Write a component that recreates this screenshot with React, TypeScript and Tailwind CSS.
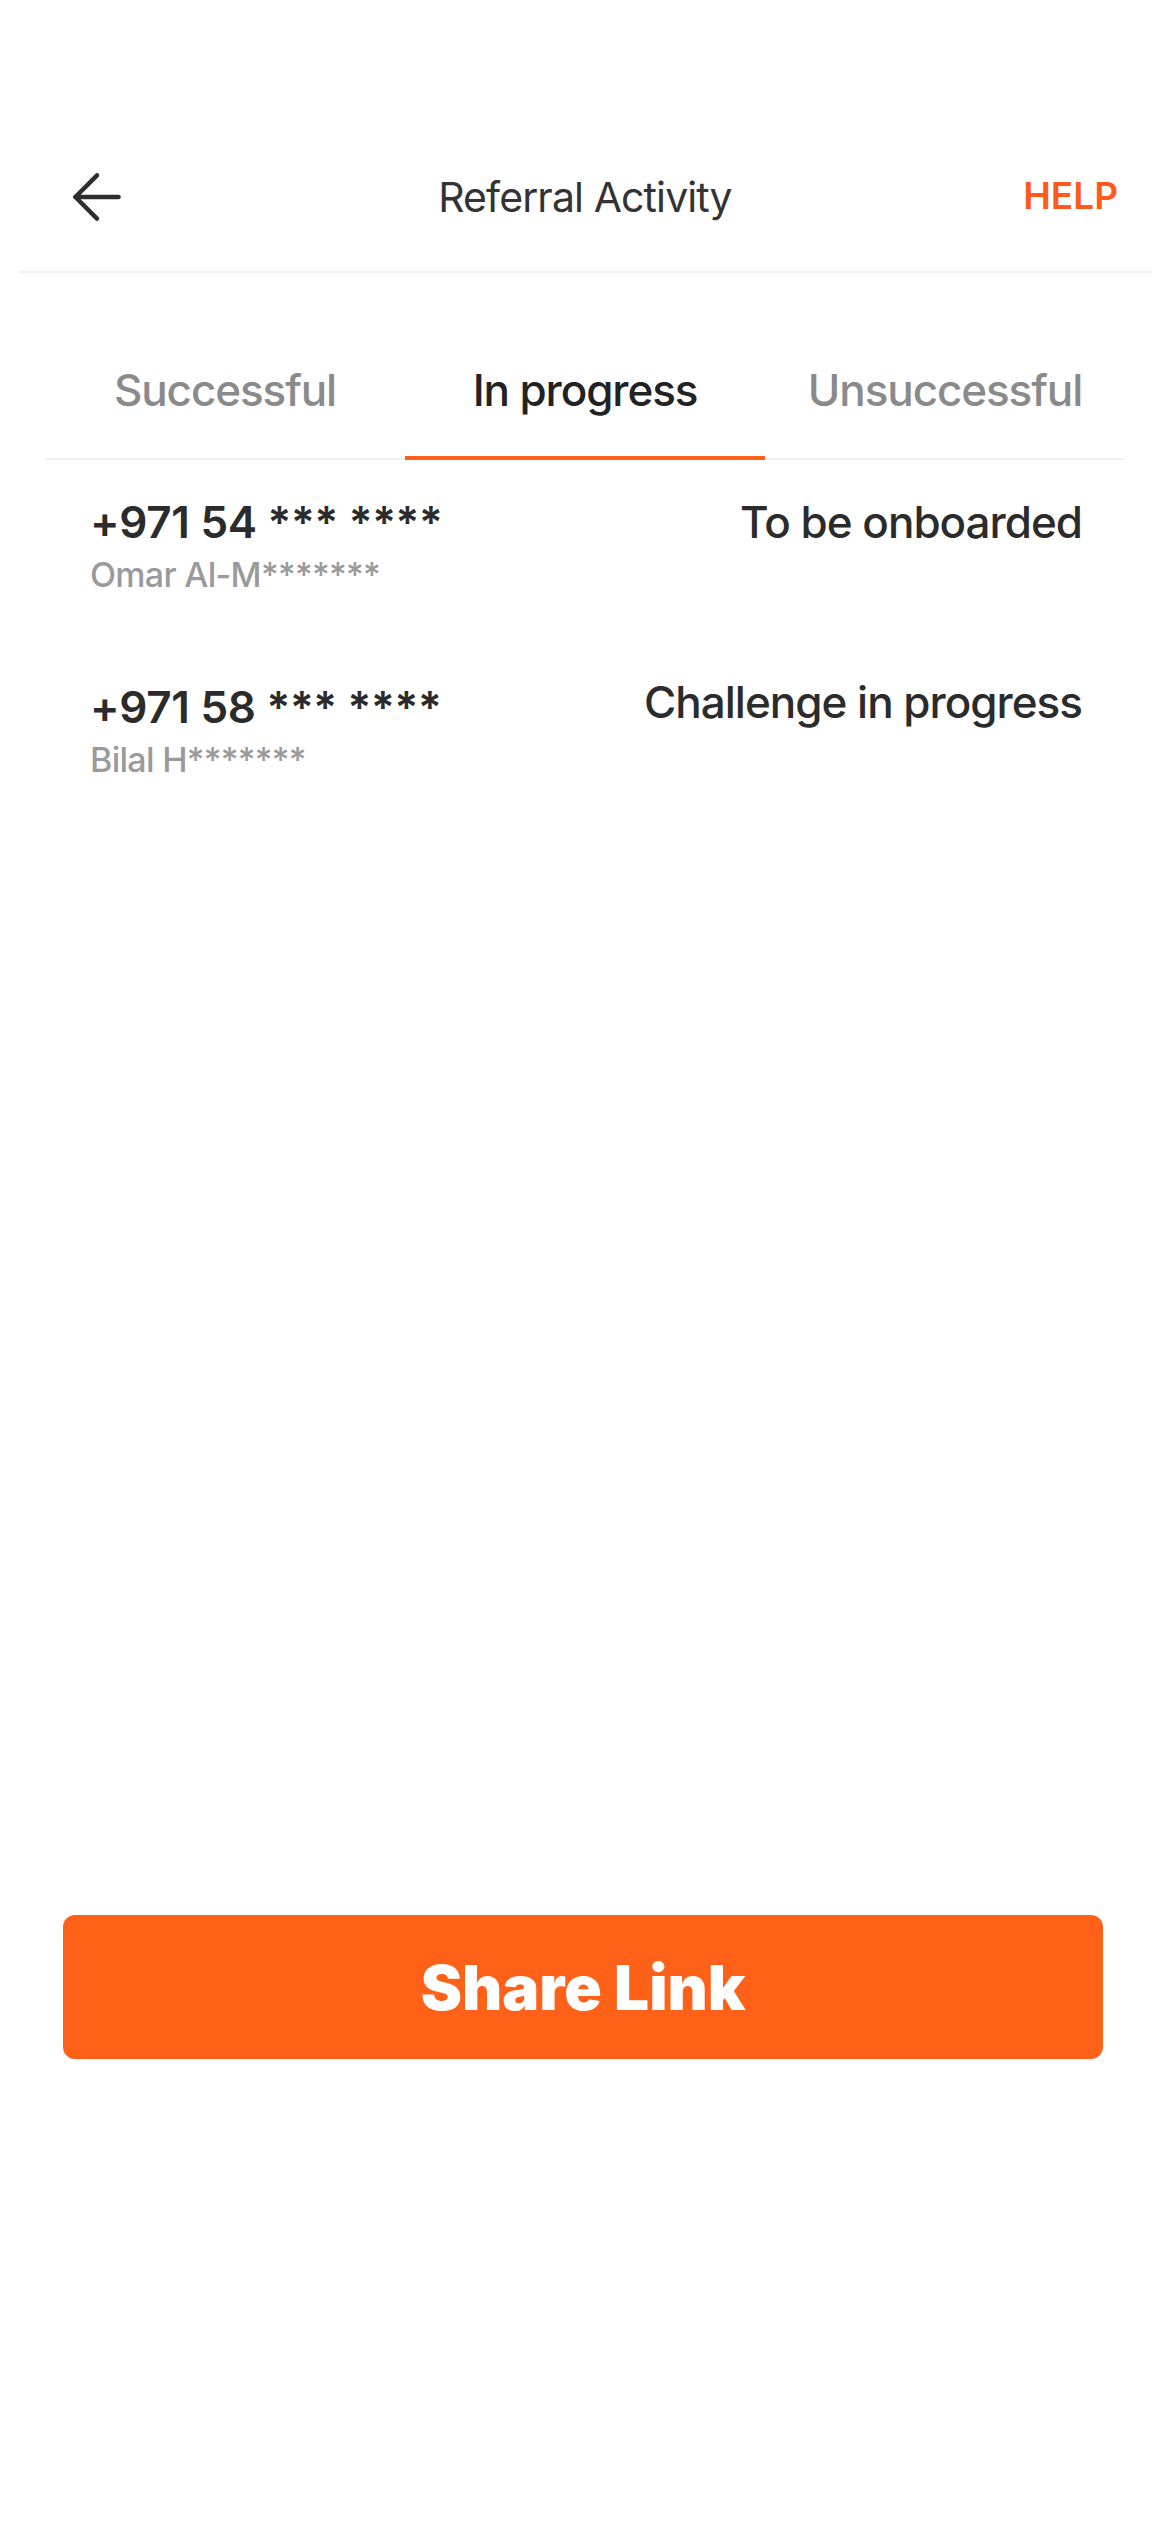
import { ArrowLeft } from "lucide-react";

const tabs = ["Successful", "In progress", "Unsuccessful"];

const referrals = [
  { phone: "+971 54 *** ****", name: "Omar Al-M*******", status: "To be onboarded", lift: "" },
  { phone: "+971 58 *** ****", name: "Bilal H*******", status: "Challenge in progress", lift: "-mt-[5px]" },
];

export default function App() {
  const active = "In progress";

  return (
    <div className="min-h-[2532px] flex flex-col bg-white font-['Inter',_'Noto_Sans',_sans-serif]">
      {/* header */}
      <div className="pt-[147px]">
        <div className="grid grid-cols-[1fr_auto_1fr] items-center h-[100px]">
          <div className="pl-[60px] flex items-center">
            <ArrowLeft size={74} strokeWidth={1.45} className="text-[#2e2e2e]" />
          </div>
          <span className="text-[41px] leading-[50px] text-[#333333] tracking-[-0.9px]">
            Referral Activity
          </span>
          <div className="flex justify-end pr-[52px] -mt-[3px]">
            <span className="text-[37px] leading-[44px] font-semibold text-[#ff5a1a]">HELP</span>
          </div>
        </div>
      </div>
      <div className="mt-[24px] mx-[19px] h-[2px] bg-[#efefef]" />

      {/* tabs */}
      <div className="mx-[45px] grid grid-cols-3 border-b-2 border-[#f1f1f1]">
        {tabs.map((t) => (
          <div key={t} className="flex flex-col items-center -mb-[2px]">
            <span
              className={`pt-[88px] pb-[37px] text-[44px] leading-[58px] tracking-[-1.1px] font-medium ${
                t === active ? "text-[#222222]" : "text-[#8a8a8a]"
              }`}
            >
              {t}
            </span>
            <div className={`h-[4px] w-full ${t === active ? "bg-[#ff6119]" : "bg-transparent"}`} />
          </div>
        ))}
      </div>

      {/* list */}
      <div className="pt-[36px] flex flex-col gap-[86px] pl-[90px] pr-[88px]">
        {referrals.map((r) => (
          <div key={r.phone} className="flex justify-between items-start">
            <div className="flex flex-col">
              <span className="text-[44px] leading-[53px] font-semibold text-[#2b2b2b] tracking-[-0.3px]">
                {r.phone}
              </span>
              <span className="mt-[5px] text-[34px] leading-[41px] font-medium text-[#9a9a9a] tracking-[-0.7px]">
                {r.name}
              </span>
            </div>
            <span
              className={`${r.lift} text-[44px] leading-[53px] font-medium text-[#2b2b2b] tracking-[-1px]`}
            >
              {r.status}
            </span>
          </div>
        ))}
      </div>

      <div className="flex-1" />

      {/* action */}
      <div className="ml-[63px] mr-[67px]">
        <button className="w-full h-[144px] rounded-[12px] bg-[#ff6119] flex items-center justify-center">
          <span className="text-[62px] font-black text-white">Share Link</span>
        </button>
      </div>
      <div className="h-[473px]" />
    </div>
  );
}
